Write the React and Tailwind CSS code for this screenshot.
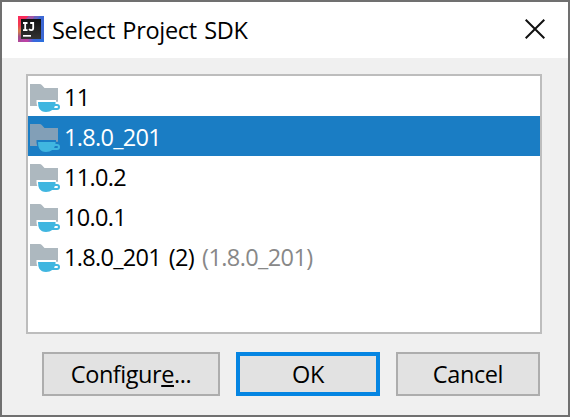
import React from 'react';

const sdks = [
  { name: '11' },
  { name: '1.8.0_201', selected: true },
  { name: '11.0.2' },
  { name: '10.0.1' },
  { name: '1.8.0_201 (2)', detail: '(1.8.0_201)' },
];

function IdeaLogo() {
  return (
    <svg width="26" height="26" viewBox="0 0 26 26" className="-mt-0.5 shrink-0">
      <defs>
        <linearGradient id="inner" x1="0" y1="0" x2="0" y2="1">
          <stop offset="0" stopColor="#101010" />
          <stop offset="1" stopColor="#333" />
        </linearGradient>
        <linearGradient id="left" x1="0" y1="0" x2="0" y2="1">
          <stop offset="0" stopColor="#fb2b58" />
          <stop offset="0.35" stopColor="#f23c51" />
          <stop offset="0.58" stopColor="#d3804a" />
          <stop offset="0.8" stopColor="#a14c86" />
          <stop offset="1" stopColor="#b3489b" />
        </linearGradient>
        <linearGradient id="base" x1="0" y1="0" x2="1" y2="0">
          <stop offset="0" stopColor="#9c4fae" />
          <stop offset="0.35" stopColor="#c43fa0" />
          <stop offset="0.6" stopColor="#3b67dc" />
          <stop offset="1" stopColor="#2870de" />
        </linearGradient>
      </defs>
      <path fill="#3d68d4" d="M0 0h26v26H0z" />
      <path fill="url(#base)" d="M0 23h26v3H0z" />
      <path fill="url(#left)" d="M0 0h3v26H0z" />
      <path fill="#f92c5b" d="M0 0h11l-3 3H0z" />
      <path fill="#a356a5" d="M11 0h6l-2 3H8z" />
      <path fill="#6864be" d="M17 0h5l-3 3h-4z" />
      <path fill="url(#inner)" d="M3 3h20v20H3z" />
      <path fill="none" stroke="#fff" strokeWidth="1.8" d="M5 7h4.500M7.200 7v7.200M5 14.200h4.500M12.200 7h3M15.200 6.100v6q0 2.100-1.900 2.100-1.300 0-2.300-1.100" />
      <path fill="#fff" d="M5 19h8v1.700H5z" />
    </svg>
  );
}

function SdkIcon({ selected }) {
  return (
    <svg width="30" height="28" viewBox="0 0 30 28" className="mt-1 shrink-0">
      <path
        fill={selected ? '#829fb7' : '#adb8bf'}
        d="M0 0h9.500q1.500 0 2.500 1.200L14.500 4H28v13.700h-2V16H6.500v2q0 2 .8 4H0z"
      />
      <path
        fill="#40b6e0"
        fillRule="evenodd"
        d="M8 18h17.500v2H27a3 3 0 0 1 0 6h-4.800q-2.200 2-6.200 2-4.500 0-6.800-3.500Q8 22.300 8 18zM24.800 22q-.2 1.200-.7 2H27a1 1 0 0 0 0-2z"
      />
    </svg>
  );
}

function SdkRow({ name, detail, selected }) {
  return (
    <li className={`flex h-10 items-center pl-0.5 ${selected ? 'bg-[#1a7dc4] text-white' : 'text-black'}`}>
      <SdkIcon selected={selected} />
      <span className="ml-1 whitespace-pre pt-1 text-[23.5px] leading-none tracking-[-0.7px] [word-spacing:2.5px]">
        {name}
        {detail && <span className="tracking-[-0.6px] text-[#888]"> {detail}</span>}
      </span>
    </li>
  );
}

export default function App() {
  return (
    <div className="flex h-[417px] w-[570px] flex-col border-2 border-[#707070] bg-[#f0f0f0] font-['Open_Sans','Noto_Sans',sans-serif] text-black">
      <header className="flex h-14 shrink-0 items-center bg-white pl-4 pr-[23px]">
        <IdeaLogo />
        <h1 className="ml-2 whitespace-nowrap pt-0.5 text-[23.5px] leading-none tracking-[-0.3px] [word-spacing:1.5px]">
          Select Project SDK
        </h1>
        <svg width="20" height="20" viewBox="0 0 20 20" className="-mt-0.5 ml-auto" aria-label="Close">
          <path fill="none" stroke="#111" strokeWidth="2" d="M.7.7l18.600 18.600M19.300.7L.7 19.300" />
        </svg>
      </header>
      <ul className="ml-6 mt-4 h-[260px] w-[516px] shrink-0 border-2 border-[#bdbdbd] bg-white">
        {sdks.map((sdk) => (
          <SdkRow key={sdk.name} {...sdk} />
        ))}
      </ul>
      <footer className="ml-10 mt-[18px] flex h-11 gap-4 text-[23.5px] leading-none">
        <button className="w-[178px] border-2 border-[#adadad] bg-[#e2e2e2] pt-px tracking-[-0.45px]">
          Configur<span className="underline decoration-2 underline-offset-2">e</span>...
        </button>
        <button className="w-36 border-4 border-[#0585e2] bg-[#e2e2e2] pt-px tracking-[-0.4px]">OK</button>
        <button className="w-36 border-2 border-[#adadad] bg-[#e2e2e2] pt-px tracking-[-0.4px]">Cancel</button>
      </footer>
    </div>
  );
}
